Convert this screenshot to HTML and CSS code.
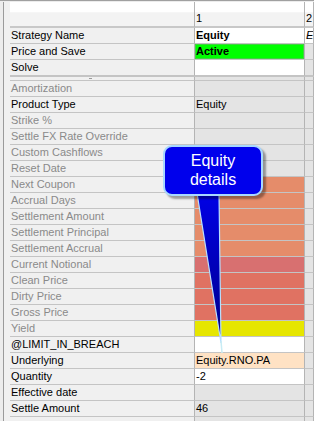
FILE: index.html
```html
<!DOCTYPE html>
<html lang="en">
<head>
    <meta charset="UTF-8">
    <title>Strategy grid</title>
    <link rel="stylesheet" href="styles.css">
</head>
<body>
    <div class="frame">
        <div class="sheet">
            <div class="row head">
                <div class="label"></div>
                <div class="cell">1</div>
                <div class="cell">2</div>
            </div>

            <div class="row">
                <div class="label">Strategy Name</div>
                <div class="cell white bold">Equity</div>
                <div class="cell white italic">Eq</div>
            </div>
            <div class="row">
                <div class="label">Price and Save</div>
                <div class="cell green bold">Active</div>
                <div class="cell"></div>
            </div>
            <div class="row">
                <div class="label">Solve</div>
                <div class="cell white"></div>
                <div class="cell"></div>
            </div>

            <div class="row split">
                <div class="label"><span class="tick"></span></div>
                <div class="cell"></div>
                <div class="cell"></div>
            </div>

            <div class="row">
                <div class="label off">Amortization</div>
                <div class="cell"></div>
                <div class="cell"></div>
            </div>
            <div class="row">
                <div class="label">Product Type</div>
                <div class="cell">Equity</div>
                <div class="cell"></div>
            </div>
            <div class="row">
                <div class="label off">Strike %</div>
                <div class="cell"></div>
                <div class="cell"></div>
            </div>
            <div class="row">
                <div class="label off">Settle FX Rate Override</div>
                <div class="cell"></div>
                <div class="cell"></div>
            </div>
            <div class="row">
                <div class="label off">Custom Cashflows</div>
                <div class="cell"></div>
                <div class="cell"></div>
            </div>
            <div class="row">
                <div class="label off">Reset Date</div>
                <div class="cell"></div>
                <div class="cell"></div>
            </div>
            <div class="row">
                <div class="label off">Next Coupon</div>
                <div class="cell salmon"></div>
                <div class="cell"></div>
            </div>
            <div class="row">
                <div class="label off">Accrual Days</div>
                <div class="cell salmon"></div>
                <div class="cell"></div>
            </div>
            <div class="row">
                <div class="label off">Settlement Amount</div>
                <div class="cell salmon"></div>
                <div class="cell"></div>
            </div>
            <div class="row">
                <div class="label off">Settlement Principal</div>
                <div class="cell salmon"></div>
                <div class="cell"></div>
            </div>
            <div class="row">
                <div class="label off">Settlement Accrual</div>
                <div class="cell salmon"></div>
                <div class="cell"></div>
            </div>
            <div class="row">
                <div class="label off">Current Notional</div>
                <div class="cell rose"></div>
                <div class="cell"></div>
            </div>
            <div class="row">
                <div class="label off">Clean Price</div>
                <div class="cell red"></div>
                <div class="cell"></div>
            </div>
            <div class="row">
                <div class="label off">Dirty Price</div>
                <div class="cell red"></div>
                <div class="cell"></div>
            </div>
            <div class="row">
                <div class="label off">Gross Price</div>
                <div class="cell red"></div>
                <div class="cell"></div>
            </div>
            <div class="row">
                <div class="label off">Yield</div>
                <div class="cell yellow"></div>
                <div class="cell"></div>
            </div>
            <div class="row">
                <div class="label">@LIMIT_IN_BREACH</div>
                <div class="cell white"></div>
                <div class="cell"></div>
            </div>
            <div class="row">
                <div class="label">Underlying</div>
                <div class="cell peach">Equity.RNO.PA</div>
                <div class="cell"></div>
            </div>
            <div class="row">
                <div class="label">Quantity</div>
                <div class="cell white">-2</div>
                <div class="cell"></div>
            </div>
            <div class="row">
                <div class="label">Effective date</div>
                <div class="cell"></div>
                <div class="cell"></div>
            </div>
            <div class="row">
                <div class="label">Settle Amount</div>
                <div class="cell">46</div>
                <div class="cell"></div>
            </div>
            <div class="row">
                <div class="label"></div>
                <div class="cell"></div>
                <div class="cell"></div>
            </div>
        </div>

        <!-- callout -->
        <svg class="tail" width="40" height="170" viewBox="0 0 40 170">
            <defs>
                <linearGradient id="tailFill" x1="0" y1="0" x2="0" y2="1">
                    <stop offset="0" stop-color="#0000e6"/>
                    <stop offset="1" stop-color="#00008a"/>
                </linearGradient>
            </defs>
            <polygon points="6,0 28,0 30,150" fill="url(#tailFill)" stroke="#b8e0ff" stroke-width="1.2"/>
            <line x1="30" y1="148" x2="31" y2="160" stroke="#c8ecf4" stroke-width="1.5"/>
        </svg>
        <div class="bubble">Equity<br>details</div>
    </div>
</body>
</html>
```

FILE: styles.css
```css
* {
    margin: 0;
    padding: 0;
    box-sizing: border-box;
}

body {
    font-family: "Liberation Sans", Arial, sans-serif;
    font-size: 11px;
    color: #000;
    background-color: #ececec;
    width: 314px;
    height: 421px;
    overflow: hidden;
}

.frame {
    position: relative;
    height: 421px;
    border-top: 1px solid #a0a0a0;
    padding-left: 3px;
}

.sheet {
    border-left: 1px solid #9a9a9a;
    padding-left: 6px;
    background-color: #f0f0f0;
    height: 100%;
}

.row {
    display: grid;
    grid-template-columns: 185px 110px 1fr;
    height: 16px;
}

.row > div {
    border-bottom: 1px solid #c4c4c4;
    line-height: 15px;
    white-space: nowrap;
    overflow: hidden;
}

.label {
    padding-left: 1px;
    background-color: #f0f0f0;
    border-right: 1px solid #b4b4b4;
}

.label.off {
    color: #8a8a8a;
}

.cell {
    padding-left: 1px;
    background-color: #e4e4e4;
    border-right: 1px solid #b4b4b4;
}

.head {
    height: 26px;
    margin-top: 1px;
}

.head > div {
    background: linear-gradient(#ffffff 0%, #ffffff 40%, #f3f3f3 45%, #f3f3f3 100%);
    border-bottom: 2px solid #c8c8c8;
    line-height: 14px;
    padding-top: 9px;
}

.split {
    height: 5px;
    border-top: 1px solid #c4c4c4;
}

.tick {
    display: block;
    width: 3px;
    height: 1px;
    margin: 1px 0 0 78px;
    background-color: #9a9a9a;
}

.white { background-color: #ffffff; }
.green { background-color: #00ff00; box-shadow: inset 0 0 0 1px #3fd43f; }
.salmon { background-color: #e58c6a; }
.rose { background-color: #d87070; }
.red { background-color: #e07262; }
.yellow { background-color: #e6e600; }
.peach { background-color: #ffe2c4; }

.bold { font-weight: bold; }
.italic { font-style: italic; }

.bubble {
    position: absolute;
    left: 163px;
    top: 144px;
    width: 100px;
    height: 51px;
    background-color: #0000ec;
    border: 2px solid #a8d8ff;
    border-radius: 9px;
    box-shadow: 3px 3px 2px rgba(0, 0, 0, 0.35);
    color: #ffffff;
    font-size: 16px;
    line-height: 19px;
    text-align: center;
    padding-top: 4px;
}

.tail {
    position: absolute;
    left: 191px;
    top: 192px;
}
```
